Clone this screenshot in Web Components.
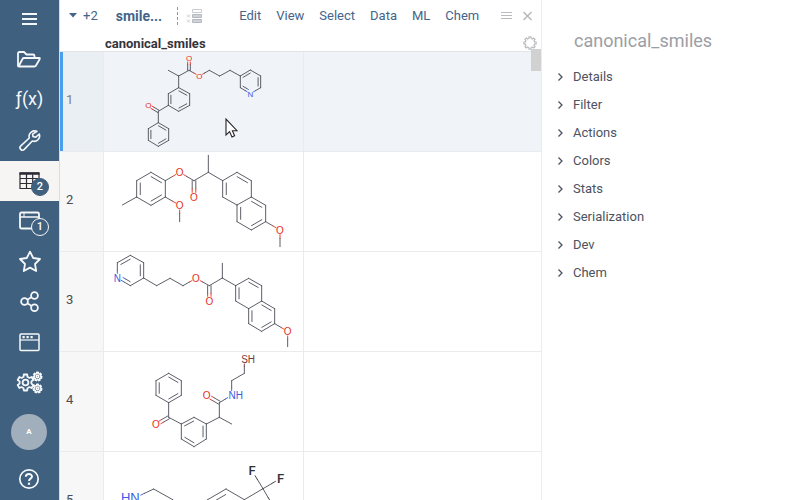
<!DOCTYPE html>
<html lang="en">
<head>
<meta charset="utf-8">
<title>canonical_smiles</title>
<style>
  html, body { height: 100%; margin: 0; }
  body { font: 13px/16px Roboto, "Liberation Sans", sans-serif; color: #4d5261; background: #fff; overflow: hidden; }
</style>
</head>
<body>
<app-shell>
  <side-bar slot="nav"></side-bar>
  <view-toolbar slot="toolbar"></view-toolbar>
  <data-grid slot="grid"></data-grid>
  <context-panel slot="panel" heading="canonical_smiles">
    <panel-section>Details</panel-section>
    <panel-section>Filter</panel-section>
    <panel-section>Actions</panel-section>
    <panel-section>Colors</panel-section>
    <panel-section>Stats</panel-section>
    <panel-section>Serialization</panel-section>
    <panel-section>Dev</panel-section>
    <panel-section>Chem</panel-section>
  </context-panel>
</app-shell>
<script>
class Base extends HTMLElement {
  constructor() {
    super();
    this.attachShadow({ mode: 'open' });
  }
  connectedCallback() {
    this.shadowRoot.innerHTML = '<style>:host,*{box-sizing:border-box}button{font:inherit;color:inherit;background:none;border:0;padding:0;margin:0;text-align:left;cursor:pointer}</style>' + this.view();
  }
}

customElements.define('app-shell', class extends Base {
  view() {
    return `<style>
      :host { display: grid; grid-template-columns: auto minmax(0, 482fr) minmax(0, 258fr); height: 100vh; }
      main { display: flex; flex-direction: column; min-height: 0; overflow: hidden; border-right: 1px solid #ebecee; }
      ::slotted([slot=grid]) { flex: 1; min-height: 0; }
    </style>
    <slot name="nav"></slot>
    <main><slot name="toolbar"></slot><slot name="grid"></slot></main>
    <slot name="panel"></slot>`;
  }
});

const ICONS = {
  menu: '<path d="M7 8h15M7 13h15M7 18h15" stroke-width="2"/>',
  folder: '<path d="M3 19.500V6.500Q3 5 4.500 5H9L11.500 7.500H18Q19.500 7.500 19.500 9V11M3.500 19.500L7.500 12Q8 11 9 11H24Q25.500 11 24.500 12.500L21 18.500Q20.500 19.500 19.500 19.500H4Q3 19.500 3 18.500"/>',
  wrench: '<path d="M22.500 4.800A5.500 5.500 0 0 0 14.300 11L5.800 18.800A2.500 2.500 0 0 0 9.300 22.400L17.300 14A5.500 5.500 0 0 0 24.300 7L20.500 10.300L18 9.500L17.600 7.200L21.500 4.600" stroke-width="1.600"/>',
  table: '<path d="M5 6h19v15.500h-19zM5 11.500h19M5 16.500h19M11.500 6v15.500M17.700 6v15.500" stroke-width="1.200"/><path d="M4.500 6.500h20" stroke-width="2.500"/>',
  browser: '<rect x="5" y="5.500" width="19" height="16" rx="1.500"/><path d="M5 10h19" stroke-width="1.500"/><path d="M9 6v4" stroke-width="1"/>',
  star: '<path d="M15 4.700L18.200 11L25 12L20 17L21.200 24L15 20.600L8.800 24L10 17L5 12L11.800 11Z"/>',
  share: '<circle cx="9.500" cy="14.500" r="3.400"/><circle cx="19.500" cy="8.500" r="3.400"/><circle cx="19.500" cy="20.800" r="3.400"/><path d="M12.600 12.600l3.800-2.300M12.600 16.500l3.800 2.300"/>',
  windows: '<rect x="5" y="7" width="19" height="16.500" rx="1" stroke-width="1.500"/><path d="M5 13h19" stroke-width="1.200"/><path d="M7.500 10.200h2.200M11.500 10.200h2.200M15.500 10.200h2.200" stroke-width="2.200"/>'
};

function gearPath(cx, cy, r, teeth, depth) {
  const p = [];
  const step = Math.PI * 2 / teeth;
  for (let i = 0; i < teeth; i++) {
    for (const [k, rad] of [[-0.32, r], [-0.2, r + depth], [0.2, r + depth], [0.32, r]]) {
      const a = (i + k) * step - Math.PI / 2;
      p.push((cx + rad * Math.cos(a)).toFixed(2) + ' ' + (cy + rad * Math.sin(a)).toFixed(2));
    }
  }
  return `<path d="M${p.join('L')}Z"/>`;
}
ICONS.gears = gearPath(10.5, 15.5, 6, 6, 2.2) + '<circle cx="10.500" cy="15.500" r="2.900"/><g stroke-width="1.500">' +
  gearPath(22.5, 9.5, 3, 7, 1.3) + gearPath(22.5, 21.5, 3, 7, 1.3) + '<circle cx="22.500" cy="9.500" r="1.200"/><circle cx="22.500" cy="21.500" r="1.200"/></g>';

customElements.define('nav-item', class extends Base {
  view() {
    const icon = this.getAttribute('icon');
    const badge = this.getAttribute('badge');
    const picture = icon === 'fx'
      ? '<span class="fx">ƒ(x)</span>'
      : `<svg viewBox="0 0 30 28" width="30" height="28" aria-hidden="true">${ICONS[icon]}</svg>`;
    return `<style>
      :host { display: block; color: #f5f8fa; }
      :host([active]) { background: #f7f5f3; color: #2d2a33; }
      button { display: grid; place-items: center; width: 100%; height: 40px; position: relative; }
      svg { display: block; fill: none; stroke: currentColor; stroke-width: 1.8; stroke-linejoin: round; }
      .fx { font: 400 18px/24px Roboto, sans-serif; padding-bottom: 4px; }
      .badge { position: absolute; left: 31px; top: 17px; width: 18px; height: 18px; border-radius: 50%;
        background: #40607f; color: #fff; font-size: 11px; line-height: 16px; text-align: center; font-weight: 500; border: 1px solid #40607f; }
      :host([outlined]) .badge { border-color: #f5f8fa; }
    </style>
    <button type="button" aria-label="${this.getAttribute('label')}">${picture}${badge ? `<span class="badge">${badge}</span>` : ''}</button>`;
  }
});

customElements.define('side-bar', class extends Base {
  view() {
    return `<style>
      :host { display: block; width: 60px; background: #40607f; border-right: 1px solid #d5dde5; overflow: hidden; }
      nav { display: flex; flex-direction: column; }
      nav-item:first-child { margin-bottom: 1px; }
      .avatar { width: 36px; height: 36px; margin: 13px auto 0 11px; border-radius: 50%; background: #a1afbd; color: #fff; font-size: 8px; font-weight: 700; text-align: center; }
      .help { width: 22px; height: 22px; margin: 18px 18px 0; }
      svg { display: block; }
    </style>
    <nav aria-label="Main">
      <nav-item icon="menu" label="Menu"></nav-item>
      <nav-item icon="folder" label="Files"></nav-item>
      <nav-item icon="fx" label="Functions"></nav-item>
      <nav-item icon="wrench" label="Tools"></nav-item>
      <nav-item icon="table" label="Tables" badge="2" active></nav-item>
      <nav-item icon="browser" label="Views" badge="1" outlined></nav-item>
      <nav-item icon="star" label="Favorites"></nav-item>
      <nav-item icon="share" label="Share"></nav-item>
      <nav-item icon="windows" label="Windows"></nav-item>
      <nav-item icon="gears" label="Settings"></nav-item>
      <button type="button" class="avatar">A</button>
      <button type="button" class="help" aria-label="Help"><svg viewBox="0 0 22 22" width="22" height="22" fill="none" stroke="#f5f8fa"><circle cx="11" cy="11" r="9.200" stroke-width="1.700"/><path d="M7.800 8.800C8 5.200 14 5.200 14 8.600C14 10.800 11 10.600 11 13" stroke-width="2"/><path d="M11 14.600v2.200" stroke-width="2.200"/></svg></button>
    </nav>`;
  }
});

customElements.define('view-toolbar', class extends Base {
  view() {
    return `<style>
      :host { display: flex; align-items: center; height: 31px; padding: 0 8px 0 9px; color: #44648a; white-space: nowrap; }
      .stack { display: flex; align-items: center; gap: 6px; }
      .name { margin-left: 18px; font-size: 14px; font-weight: 700; }
      .rule { height: 18px; margin-left: 15px; border-left: 1px dashed #8f959c; }
      .cols { margin-left: 8px; }
      .menus { display: flex; gap: 15px; margin-left: 36px; }
      .tools { display: flex; gap: 10px; margin-left: auto; }
      svg { display: block; }
    </style>
    <button type="button" class="stack"><svg width="8" height="5" viewBox="0 0 8 5"><path d="M0 0h8L4 4.500z" fill="#44648a"/></svg>+2</button>
    <button type="button" class="name">smile...</button>
    <span class="rule"></span>
    <button type="button" class="cols" aria-label="Columns"><svg width="17" height="16" viewBox="0 0 17 16" fill="#ced3da" stroke="#b5bac1"><path d="M6.500 1.500h9v3h-9z" fill="#fff" stroke="#c9cdd2"/><path d="M6.500 6.500h9v3h-9zM6.500 11.500h9v3h-9z"/><path d="M1 6.500l3 3M4 6.500l-3 3M1 11.500l3 3M4 11.500l-3 3" stroke="#c9cdd2"/></svg></button>
    <div class="menus">
      <button type="button">Edit</button><button type="button">View</button><button type="button">Select</button><button type="button">Data</button><button type="button">ML</button><button type="button">Chem</button>
    </div>
    <div class="tools">
      <button type="button" aria-label="Options"><svg width="11" height="10" viewBox="0 0 11 10" stroke="#b9babd"><path d="M0 1.500h11M0 4.500h11M0 7.500h11"/></svg></button>
      <button type="button" aria-label="Close"><svg width="11" height="10" viewBox="0 0 11 10" stroke="#b4b5b8" stroke-width="1.400"><path d="M1.500 1l8 8M9.500 1l-8 8"/></svg></button>
    </div>`;
  }
});

/* Atoms are [x, y, label, text-anchor]; three drawing units make one pixel.
   Exocyclic double bonds appear only in "doubles"; ring bonds appear in both lists. */
const NAPHTHYL_DOUBLES = ['11=12', '15=10', '16=13', '17=18', '19=14'];
const MOLECULES = {
  m1: {
    box: '132 6 600 300', size: 24,
    atoms: [[325,61],[356,78],[387,61],[387,25,'O'],[418,78,'O'],[448,61],[479,78],[510,61],
      [541,78],[571,60],[602,78],[602,113],[571,131,'N'],[541,113],
      [356,113],[389,131],[389,166],[356,184],[325,166],[325,131],
      [295,184],[265,166,'O'],[295,218],[326,236],[326,271],[295,289],[265,271],[265,236]],
    chains: ['0-1-2-4-5-6-7-8-9-10-11-12-13-8', '1-14-15-16-17-18-19-14', '18-20-22-23-24-25-26-27-22'],
    doubles: ['2=3', '8=9', '10=11', '12=13', '14=15', '16=17', '18=19', '20=21', '22=23', '24=25', '26=27'],
    rings: [[8,9,10,11,12,13], [14,15,16,17,18,19], [22,23,24,25,26,27]]
  },
  m2: {
    box: '0 6 600 300', size: 30,
    atoms: [[55,165],[98,141],[98,92],[141,67],[184,92],[184,141],[141,166],
      [227,67,'O'],[270,92],[313,67],
      [356,92],[399,67],[442,92],[442,141],[399,165],[356,141],[485,166],[485,215],[442,240],[399,215],
      [528,240,'O'],[528,290],[270,141,'O'],[313,16],[227,166,'O'],[227,215]],
    chains: ['0-1-2-3-4-5-6-1', '4-7-8-9-10-11-12-13-14-15-10', '13-16-17-18-19-14', '17-20-21', '9-23', '5-24-25'],
    doubles: ['1=2', '3=4', '5=6', '8=22', ...NAPHTHYL_DOUBLES],
    rings: [[1,2,3,4,5,6], [10,11,12,13,14,15], [13,16,17,18,19,14]]
  },
  m3: {
    box: '0 6 600 300', size: 30,
    atoms: [[40,84,'N'],[40,38],[79,16],[119,38],[119,84],[79,107],[158,107],[198,85],[237,107],[276,85,'O'],
      [395,107],[434,85],[473,107],[473,153],[434,176],[395,153],[512,176],[512,221],[473,244],[434,221],
      [551,244,'O'],[551,290],[316,107],[316,153,'O'],[355,84],[355,40]],
    chains: ['0-1-2-3-4-5-0', '4-6-7-8-9-22-24-10-11-12-13-14-15-10', '13-16-17-18-19-14', '17-20-21', '24-25'],
    doubles: ['1=2', '3=4', '5=0', '22=23', ...NAPHTHYL_DOUBLES],
    rings: [[0,1,2,3,4,5], [10,11,12,13,14,15], [13,16,17,18,19,14]]
  },
  m4: {
    box: '0 6 600 300', size: 30,
    atoms: [[194,70],[232,92],[232,136],[194,158],[156,136],[156,92],[194,202],[156,224,'O'],
      [232,222],[270,202],[307,222],[307,267],[270,290],[232,267],
      [346,202],[383,222],[346,158],[308,136,'O'],[383,136,'NH','start'],[383,92],[421,70],[421,28,'SH','start']],
    chains: ['0-1-2-3-4-5-0', '3-6-8-9-10-11-12-13-8', '10-14-15', '14-16-18-19-20-21'],
    doubles: ['0=1', '2=3', '4=5', '6=7', '8=9', '10=11', '12=13', '16=17'],
    rings: [[0,1,2,3,4,5], [8,9,10,11,12,13]]
  },
  m5: {
    box: '0 306 600 300', size: 39,
    atoms: [[94,443,'HN','end'],[149,417],[206,449],[206,513],[311,449],[366,417],[421,449],[421,513],[366,545],[311,513],
      [477,416],[444,362,'F'],[530,385,'F'],[509,471,'F']],
    chains: ['0-1-2-3', '4-5-6-7-8-9-4', '6-10-11', '12-10-13'],
    doubles: ['4=5', '6=7', '8=9'],
    rings: [[4,5,6,7,8,9]]
  }
};
const TINT = { O: '#e5301c', N: '#3a5be0', S: '#7d3434', F: '#30323a', C: '#4b4d56' };

function drawMolecule({ box, size, atoms, chains, doubles, rings }) {
  let lines = '', labels = '';
  const element = a => !a[2] ? 'C' : a[2] === 'HN' ? 'N' : a[2][0];
  const bond = (i, j, ox, oy, trim) => {
    const a = atoms[i], b = atoms[j];
    const dx = b[0] - a[0], dy = b[1] - a[1], len = Math.hypot(dx, dy);
    const reach = atom => atom[2] ? size * 0.46 / len : trim;
    const at = t => [a[0] + dx * t + ox, a[1] + dy * t + oy].map(v => v.toFixed(1)).join(' ');
    const s = reach(a), e = 1 - reach(b);
    const ea = element(a), eb = element(b);
    const seg = (from, to, el) => { lines += `<path d="M${at(from)}L${at(to)}" stroke="${TINT[el]}"/>`; };
    if (ea === eb) seg(s, e, ea);
    else { seg(s, 0.5, ea); seg(0.5, e, eb); }
  };
  const ringOf = (i, j) => rings.find(r => r.includes(i) && r.includes(j));
  for (const text of doubles) {
    const [i, j] = text.split('=').map(Number), a = atoms[i], b = atoms[j];
    const dx = b[0] - a[0], dy = b[1] - a[1], len = Math.hypot(dx, dy);
    const nx = -dy / len, ny = dx / len;
    const ring = ringOf(i, j);
    if (!ring) {
      const w = len * 0.11;
      bond(i, j, nx * w, ny * w, 0);
      bond(i, j, -nx * w, -ny * w, 0);
    } else {
      const cx = ring.reduce((s, k) => s + atoms[k][0], 0) / ring.length;
      const cy = ring.reduce((s, k) => s + atoms[k][1], 0) / ring.length;
      const side = Math.sign((cx - a[0]) * nx + (cy - a[1]) * ny);
      const w = side * len * 0.22;
      bond(i, j, nx * w, ny * w, 0.14);
    }
  }
  for (const chain of chains) {
    const ids = chain.split('-').map(Number);
    for (let k = 1; k < ids.length; k++) bond(ids[k - 1], ids[k], 0, 0, 0);
  }
  for (const a of atoms) {
    if (!a[2]) continue;
    const anchor = a[3] || 'middle';
    const shift = anchor === 'start' ? -size * 0.32 : anchor === 'end' ? size * 0.34 : 0;
    labels += `<text class="${element(a)}" x="${a[0] + shift}" y="${a[1] + size * 0.36}" text-anchor="${anchor}" fill="${TINT[element(a)]}">${a[2]}</text>`;
  }
  return `<svg viewBox="${box}" width="200" height="100" font-size="${size}" role="img" aria-label="Structure"><g fill="none" stroke-width="2.700" stroke-linecap="round">${lines}</g>${labels}</svg>`;
}

customElements.define('mol-structure', class extends Base {
  view() {
    return `<style>
      :host { display: block; height: 99px; overflow: hidden; }
      svg { display: block; font-family: "Liberation Sans", sans-serif; }
      .F { font-family: Roboto, sans-serif; font-weight: 500; }
    </style>${drawMolecule(MOLECULES[this.getAttribute('name')])}`;
  }
});

customElements.define('data-grid', class extends Base {
  view() {
    const rows = ['m1', 'm2', 'm3', 'm4', 'm5'].map((m, i) =>
      `<tr${i ? '' : ' class="current"'}><th scope="row">${i + 1}</th><td><mol-structure name="${m}"></mol-structure></td><td></td></tr>`).join('');
    return `<style>
      :host { display: block; position: relative; overflow: hidden; }
      table { width: 100%; border-collapse: separate; border-spacing: 0; table-layout: fixed; }
      th, td { padding: 0; border-bottom: 1px solid #e9ebed; }
      .num { width: 44px; } .mol { width: 200px; }
      thead th { height: 21px; text-align: left; vertical-align: bottom; font-size: 13px; line-height: 15px; font-weight: 700; color: #35343c; border-color: #e2e5e8; }
      thead .title { padding-left: 1px; }
      tbody th { height: 100px; text-align: left; vertical-align: middle; padding: 0 0 4px 6px; font-weight: 400; background: #f7f7f7; color: #4c4c52; }
      tbody th, td:nth-child(2) { border-right: 1px solid #e9ebed; }
      .current td { background: #f0f3f8; }
      .current th { background: #e9eff2; color: #7e8084; box-shadow: inset 3px 0 #4a9fec; }
      thead svg { display: block; margin: 0 4px 1px auto; }
      .thumb { position: absolute; right: 0; top: 18px; width: 10px; height: 22px; background: #d1d1d1; }
      .pointer { position: absolute; left: 165px; top: 87px; }
    </style>
    <table>
      <colgroup><col class="num"><col class="mol"><col></colgroup>
      <thead><tr><th></th><th class="title" scope="col">canonical_smiles</th><th><svg width="14" height="14" viewBox="0 0 14 14" fill="none" stroke="#b9babd" stroke-width="1.200">${gearPath(7, 7, 4.7, 8, 1.5)}</svg></th></tr></thead>
      <tbody>${rows}</tbody>
    </table>
    <span class="thumb"></span>
    <svg class="pointer" width="13" height="21" viewBox="0 0 13 21" aria-hidden="true"><path d="M1 1v16l3.600-3.400L7 19l2.600-1.200L7.400 12.700H12z" fill="#fff" stroke="#24242a" stroke-width="1.100"/></svg>`;
  }
});

customElements.define('context-panel', class extends Base {
  view() {
    return `<style>
      :host { display: block; padding: 29px 16px 0; min-width: 0; overflow: hidden; }
      h1 { margin: 0 0 10px 16px; font-size: 18px; line-height: 24px; font-weight: 400; color: #9c9ea6; }
    </style><h1>${this.getAttribute('heading')}</h1><slot></slot>`;
  }
});

customElements.define('panel-section', class extends Base {
  view() {
    return `<style>
      :host { display: block; }
      button { display: flex; align-items: center; gap: 9px; width: 100%; height: 28px; }
      svg { display: block; }
    </style>
    <button type="button" aria-expanded="false"><svg width="6" height="8" viewBox="0 0 6 8" fill="none" stroke="#4d5261" stroke-width="1.300"><path d="M0.500 0.500L4 4L0.500 7.500"/></svg><slot></slot></button>`;
  }
});
</script>
</body>
</html>
